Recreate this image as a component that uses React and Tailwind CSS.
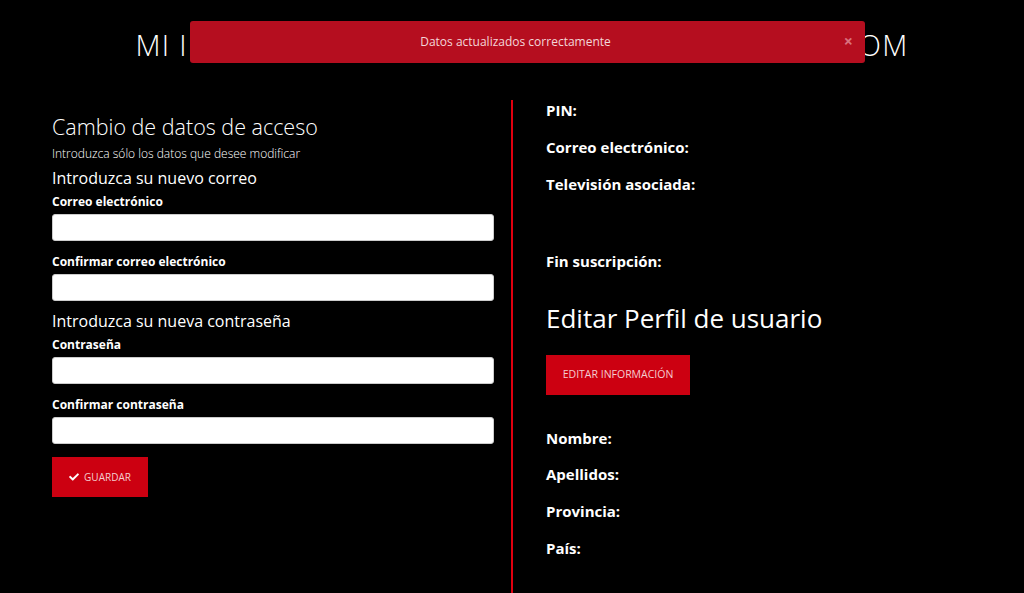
import { FaCheck } from "react-icons/fa";

const font = { fontFamily: '"Open Sans", "Liberation Sans", sans-serif' };

const Field = ({ label, first }) => (
  <div className={first ? "mt-[6px]" : "mt-[13px]"}>
    <label className="block text-[12px] leading-[16px] font-bold text-white">{label}</label>
    <input className="mt-[4px] block w-full h-[27px] bg-white rounded-[3px] border border-[#ccc] outline-none" />
  </div>
);

const Info = ({ label, className = "mt-[17px]" }) => (
  <p className={`text-[15px] leading-[20px] font-bold text-white ${className}`}>{label}</p>
);

export default function App() {
  return (
    <div className="relative w-full min-h-[593px] bg-black text-white" style={font}>
      {/* Header */}
      <div className="h-[100px] flex justify-center pt-[27px] pl-[20px]">
        <h1 className="text-[29px] leading-[36px] font-light tracking-[0.045em] text-white whitespace-nowrap">
          MI INFORMACIÓN DE USUARIO EN TELEVISIONES.COM
        </h1>
      </div>

      {/* Alert */}
      <div className="absolute left-[190px] top-[21px] w-[675px] h-[42px] bg-[#b50e1f] rounded-[3px] flex items-center justify-center pr-[24px] shadow">
        <span className="text-[12px] text-[#f3d6d9]">Datos actualizados correctamente</span>
        <span className="absolute right-[12px] top-[10px] text-[16px] leading-[20px] font-bold text-[#d9727d]">×</span>
      </div>

      <div className="flex">
        {/* Left column */}
        <div className="w-[513px] pl-[52px] pr-[17px] border-r-2 border-[#e0000f] pb-[97px]">
          <h2 className="mt-[14px] text-[21.5px] leading-[26px] font-light">Cambio de datos de acceso</h2>
          <p className="mt-[6px] text-[12px] leading-[16px] font-light text-white">
            Introduzca sólo los datos que desee modificar
          </p>
          <h3 className="mt-[6px] text-[16px] leading-[20px]">Introduzca su nuevo correo</h3>
          <Field label="Correo electrónico" first />
          <Field label="Confirmar correo electrónico" />
          <h3 className="mt-[10px] text-[16px] leading-[20px]">Introduzca su nueva contraseña</h3>
          <Field label="Contraseña" first />
          <Field label="Confirmar contraseña" />
          <button className="mt-[13px] w-[96px] h-[40px] bg-[#cc0011] flex items-center justify-center gap-[5px] text-[10px] text-[#f4cdd0]">
            <FaCheck className="text-white w-[10px] h-[10px]" />
            GUARDAR
          </button>
        </div>

        {/* Right column */}
        <div className="pl-[33px]">
          <Info label="PIN:" className="mt-0" />
          <Info label="Correo electrónico:" />
          <Info label="Televisión asociada:" />
          <Info label="Fin suscripción:" className="mt-[57px]" />
          <h2 className="mt-[31px] text-[26px] leading-[32px]">Editar Perfil de usuario</h2>
          <button className="mt-[21px] w-[144px] h-[40px] bg-[#cc0011] text-[10.5px] text-[#f4cdd0]">
            EDITAR INFORMACIÓN
          </button>
          <Info label="Nombre:" className="mt-[33px]" />
          <Info label="Apellidos:" className="mt-[16px]" />
          <Info label="Provincia:" />
          <Info label="País:" />
        </div>
      </div>
    </div>
  );
}
